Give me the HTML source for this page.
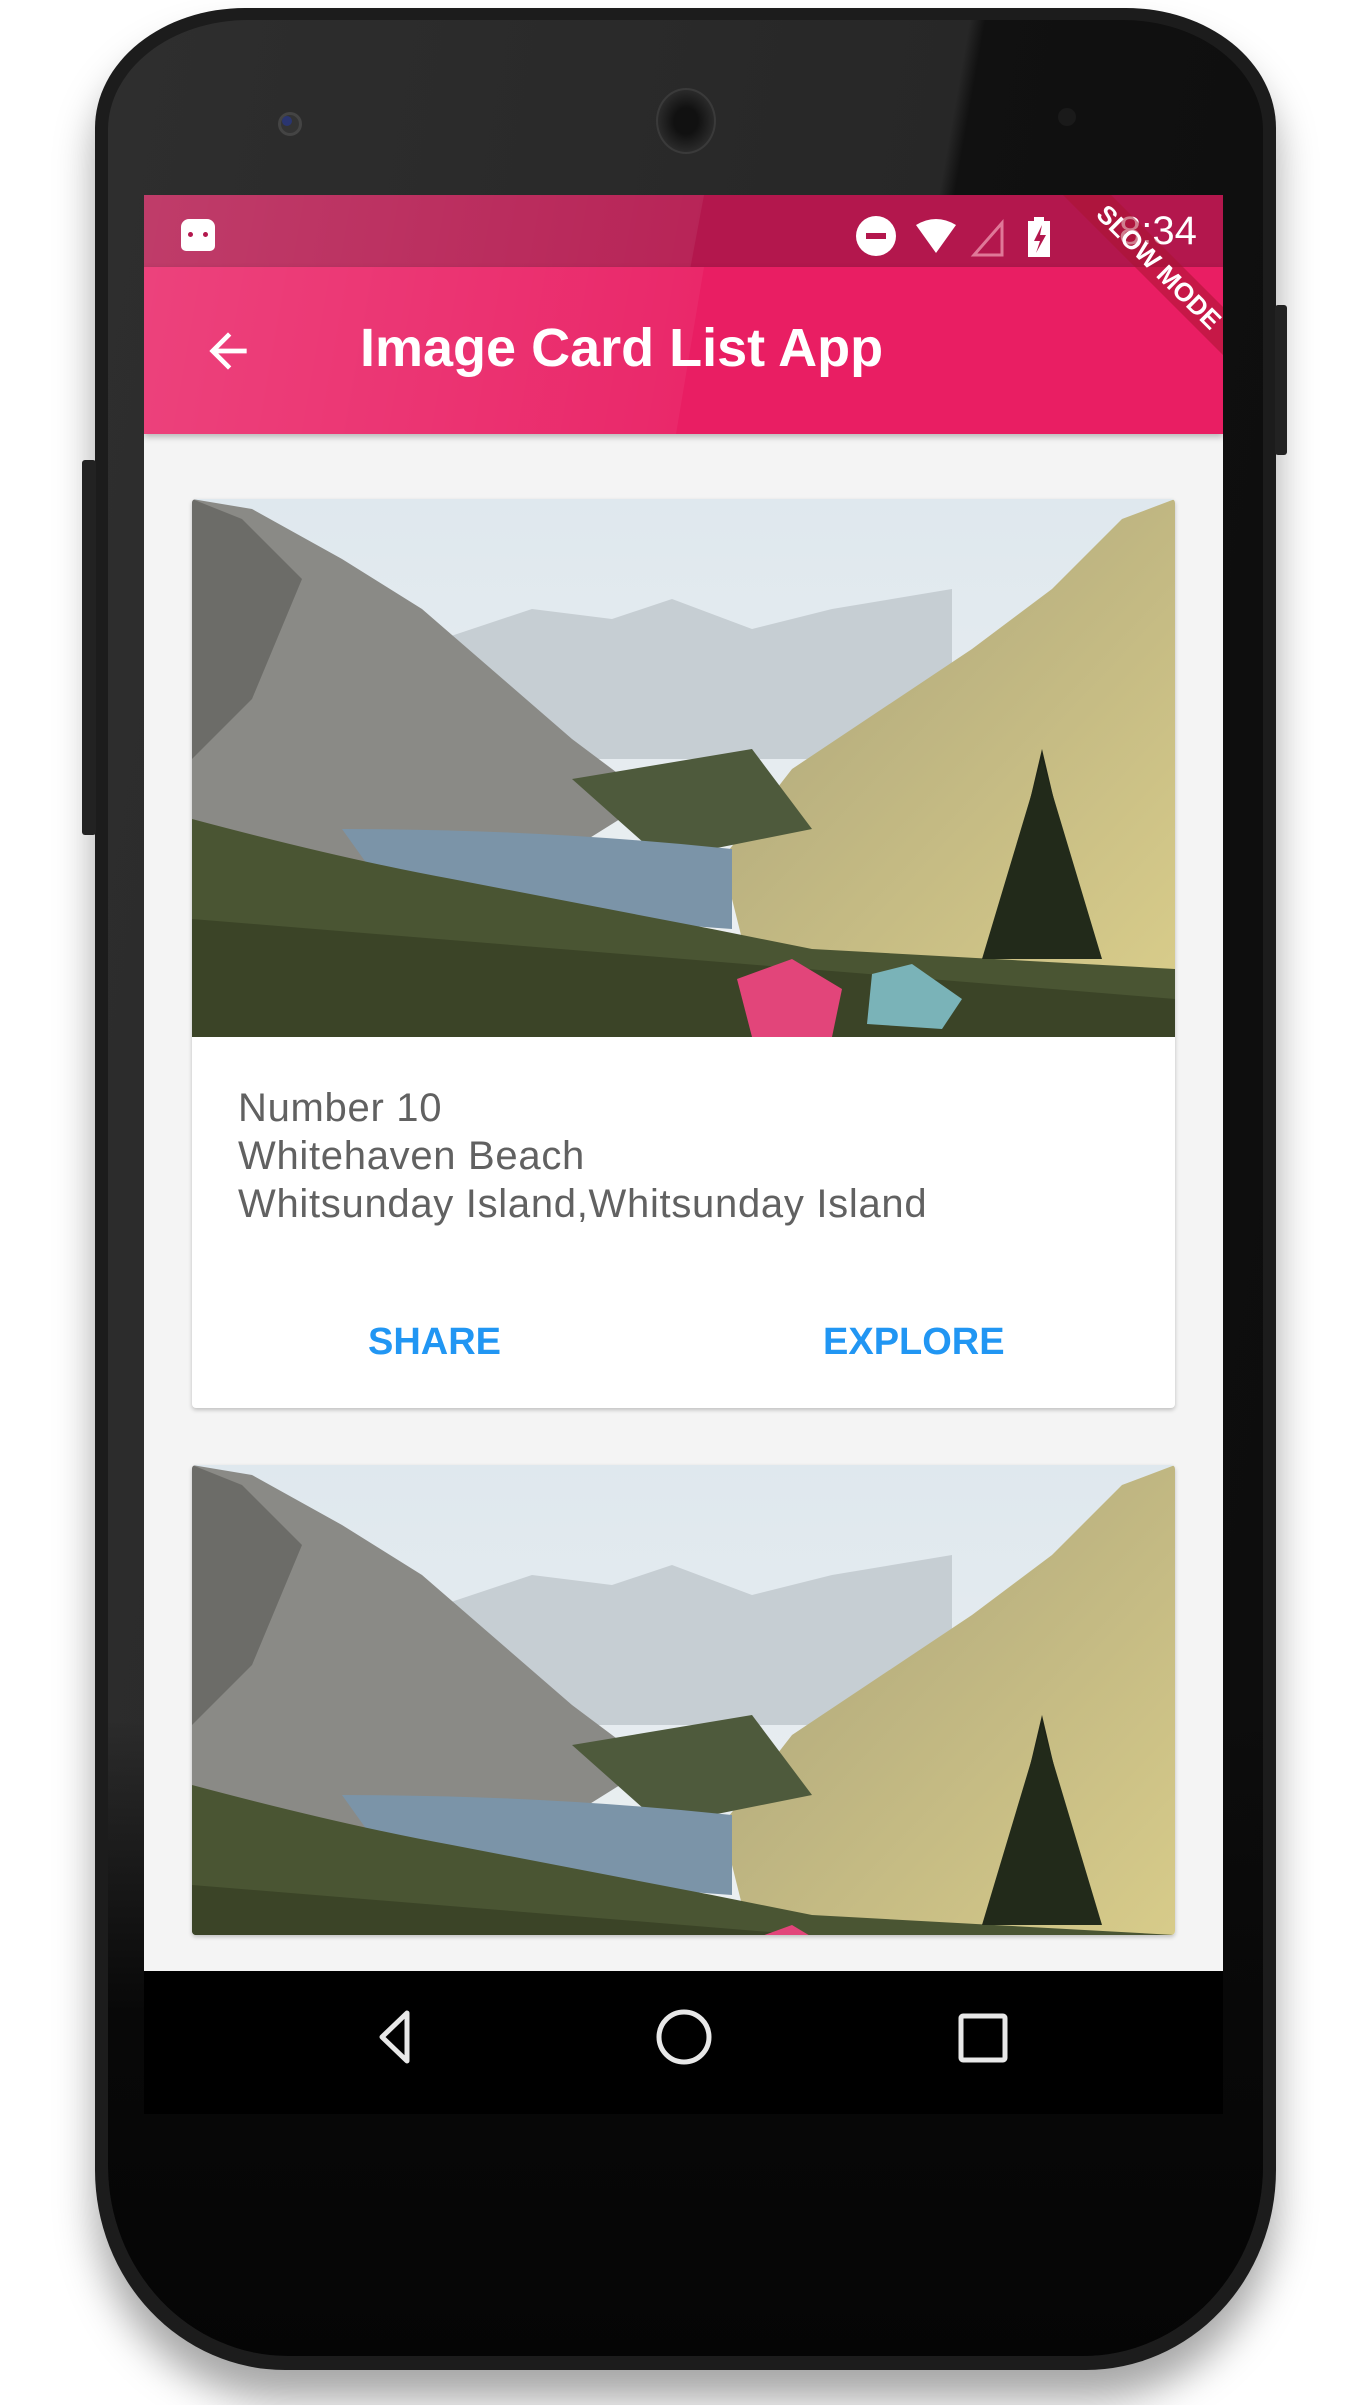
<!DOCTYPE html>
<html><head><meta charset="utf-8">
<style>
html,body{margin:0;padding:0;background:#fff;}
body{width:1370px;height:2405px;position:relative;overflow:hidden;font-family:"Liberation Sans",sans-serif;}
.abs{position:absolute;}
.phone{left:95px;top:8px;width:1181px;height:2362px;background:#1c1c1c;border-radius:150px 150px 190px 190px / 120px 120px 200px 200px;box-shadow:0 30px 40px rgba(0,0,0,0.35);}
.phoneinner{left:108px;top:20px;width:1155px;height:2336px;background:linear-gradient(100deg,#2e2e2e 0%,#272727 55%,#111 56%,#0c0c0c 100%);border-radius:140px 140px 180px 180px / 110px 110px 190px 190px;overflow:hidden;}
.screen{left:144px;top:195px;width:1079px;height:1919px;background:#f4f4f4;overflow:hidden;}
.status{left:0;top:0;width:1079px;height:72px;background:#b3174d;}
.appbar{left:0;top:72px;width:1079px;height:167px;background:#e91e63;box-shadow:0 3px 6px rgba(0,0,0,0.25);}
.card{background:#fff;border-radius:4px;box-shadow:0 2px 4px rgba(0,0,0,0.22);overflow:hidden;}
.txt{color:#616161;font-size:40px;line-height:48px;letter-spacing:0.7px;}
.btn{color:#2196f3;font-weight:bold;font-size:38px;}
.nav{left:0;top:1776px;width:1079px;height:143px;background:#000;}
</style></head><body>
<div class="abs phone"></div>
<div class="abs phoneinner"><div class="abs" style="left:0;top:1700px;width:1155px;height:650px;background:linear-gradient(rgba(8,8,8,0),#080808 45%,#050505);"></div></div>
<div class="abs" style="left:82px;top:460px;width:14px;height:375px;background:#222;border-radius:3px;"></div>
<div class="abs" style="left:1275px;top:305px;width:12px;height:150px;background:#222;border-radius:3px;"></div>
<div class="abs" style="left:278px;top:112px;width:18px;height:18px;border-radius:50%;background:#333;border:3px solid #444;"></div>
<div class="abs" style="left:282px;top:116px;width:10px;height:10px;border-radius:50%;background:#2a3570;"></div>
<div class="abs" style="left:656px;top:88px;width:56px;height:62px;border-radius:50%;background:radial-gradient(#111 30%,#2a2a2a 70%);border:2px solid #3a3a3a;"></div>
<div class="abs" style="left:1058px;top:108px;width:18px;height:18px;border-radius:50%;background:#1a1a1a;"></div>

<div class="abs screen">
  <div class="abs status"></div>
  <div class="abs" style="left:0;top:0;width:560px;height:239px;background:linear-gradient(100deg,rgba(255,255,255,0.16),rgba(255,255,255,0.05));clip-path:polygon(0 0,100% 0,92% 100%,0 100%);"></div>
  <div class="abs appbar"></div>
  <div class="abs" style="left:0;top:72px;width:560px;height:167px;background:linear-gradient(100deg,rgba(255,255,255,0.16),rgba(255,255,255,0.04));clip-path:polygon(0 0,100% 0,95% 100%,0 100%);"></div>
  <div class="abs" style="left:37px;top:24px;width:34px;height:32px;background:#fff;border-radius:8px 8px 5px 5px;"></div>
  <div class="abs" style="left:44px;top:37px;width:5px;height:5px;background:#b3174d;border-radius:50%;"></div>
  <div class="abs" style="left:59px;top:37px;width:5px;height:5px;background:#b3174d;border-radius:50%;"></div>
  <svg class="abs" style="left:710px;top:18px" width="230" height="44" viewBox="0 0 230 44">
    <circle cx="22" cy="23" r="20" fill="#fff"/><rect x="12" y="20" width="20" height="6" fill="#b3174d"/>
    <path d="M62 12 Q82 0 102 12 L82 40 Z" fill="#fff"/>
    <path d="M148 10 L148 42 L120 42 Z" fill="none" stroke="#e07898" stroke-width="3"/>
    <rect x="174" y="8" width="22" height="36" fill="#fff"/><rect x="180" y="4" width="10" height="5" fill="#fff"/>
    <path d="M188 12 L180 28 L186 28 L182 40 L192 22 L186 22 Z" fill="#b3174d"/>
  </svg>
  <div class="abs" style="left:975px;top:14px;color:#fff;font-size:40px;">8:34</div>
  <div class="abs" style="left:880px;top:55px;width:270px;height:34px;background:rgba(170,20,50,0.55);transform:rotate(45deg);color:#fff;font-weight:bold;font-size:26px;text-align:center;line-height:34px;">SLOW MODE</div>
  <svg class="abs" style="left:56px;top:128px" width="56" height="56" viewBox="0 0 24 24"><path d="M20 11H7.83l5.59-5.59L12 4l-8 8 8 8 1.41-1.41L7.83 13H20v-2z" fill="#fff"/></svg>
  <div class="abs" style="left:216px;top:122px;color:#fff;font-size:54px;font-weight:bold;">Image Card List App</div>

  <div class="abs card" style="left:48px;top:304px;width:983px;height:909px;">
    <svg width="983" height="538" viewBox="0 0 983 538" preserveAspectRatio="none" style="display:block">
      <defs>
        <linearGradient id="sky" x1="0" y1="0" x2="0" y2="1"><stop offset="0" stop-color="#dfe8ee"/><stop offset="1" stop-color="#eef1f2"/></linearGradient>
        <linearGradient id="rm" x1="0" y1="0" x2="1" y2="1"><stop offset="0" stop-color="#a9a27a"/><stop offset="1" stop-color="#d8cc8a"/></linearGradient>
      </defs>
      <rect width="983" height="538" fill="url(#sky)"/>
      <path d="M250 140 L340 110 L420 120 L480 100 L560 130 L640 110 L760 90 L760 260 L250 260 Z" fill="#c6ced3"/>
      <path d="M0 0 L60 10 L150 60 L230 110 L380 240 L460 300 L300 400 L0 380 Z" fill="#8a8a86"/>
      <path d="M0 0 L50 20 L110 80 L60 200 L0 260 Z" fill="#6c6c68"/>
      <path d="M983 0 L930 20 L860 90 L780 150 L600 270 L530 360 L560 480 L983 480 Z" fill="url(#rm)"/>
      <path d="M380 280 L560 250 L620 330 L470 360 Z" fill="#4e5a3c"/>
      <path d="M150 330 Q350 330 540 350 L540 430 Q400 420 200 400 Z" fill="#7b94a8"/>
      <path d="M0 320 Q150 360 260 380 L520 430 L620 450 L983 470 L983 538 L0 538 Z" fill="#4a5533"/>
      <path d="M0 420 L983 500 L983 538 L0 538 Z" fill="#3b4427"/>
      <path d="M850 250 L810 420 L890 420 Z" fill="#1e2418"/>
      <path d="M850 260 L790 460 L910 460 Z" fill="#222a1a"/>
      <path d="M545 480 L600 460 L650 490 L640 538 L560 538 Z" fill="#e2457a"/>
      <path d="M680 475 L720 465 L770 500 L750 530 L675 525 Z" fill="#7ab3b8"/>
    </svg>
    <div class="abs txt" style="left:46px;top:585px;">Number 10<br>Whitehaven Beach<br>Whitsunday Island,Whitsunday Island</div>
    <div class="abs btn" style="left:176px;top:822px;">SHARE</div>
    <div class="abs btn" style="left:631px;top:822px;">EXPLORE</div>
  </div>

  <div class="abs card" style="left:48px;top:1270px;width:983px;height:470px;">
    <svg width="983" height="470" viewBox="0 0 983 538" preserveAspectRatio="xMidYMin slice" style="display:block">
      <rect width="983" height="538" fill="url(#sky)"/>
      <path d="M250 140 L340 110 L420 120 L480 100 L560 130 L640 110 L760 90 L760 260 L250 260 Z" fill="#c6ced3"/>
      <path d="M0 0 L60 10 L150 60 L230 110 L380 240 L460 300 L300 400 L0 380 Z" fill="#8a8a86"/>
      <path d="M0 0 L50 20 L110 80 L60 200 L0 260 Z" fill="#6c6c68"/>
      <path d="M983 0 L930 20 L860 90 L780 150 L600 270 L530 360 L560 480 L983 480 Z" fill="url(#rm)"/>
      <path d="M380 280 L560 250 L620 330 L470 360 Z" fill="#4e5a3c"/>
      <path d="M150 330 Q350 330 540 350 L540 430 Q400 420 200 400 Z" fill="#7b94a8"/>
      <path d="M0 320 Q150 360 260 380 L520 430 L620 450 L983 470 L983 538 L0 538 Z" fill="#4a5533"/>
      <path d="M0 420 L983 500 L983 538 L0 538 Z" fill="#3b4427"/>
      <path d="M850 250 L810 420 L890 420 Z" fill="#1e2418"/>
      <path d="M850 260 L790 460 L910 460 Z" fill="#222a1a"/>
      <path d="M545 480 L600 460 L650 490 L640 538 L560 538 Z" fill="#e2457a"/>
    </svg>
  </div>

  <div class="abs nav"></div>
  <svg class="abs" style="left:0;top:1776px" width="1079" height="143" viewBox="0 0 1079 143">
    <path d="M263 42 L263 90 L238 66 Z" fill="none" stroke="#e8e8e8" stroke-width="5" stroke-linejoin="round"/>
    <ellipse cx="540" cy="66" rx="25" ry="25" fill="none" stroke="#e8e8e8" stroke-width="5"/>
    <rect x="817" y="45" width="44" height="44" rx="2" fill="none" stroke="#e8e8e8" stroke-width="5"/>
  </svg>
</div>
</body></html>
